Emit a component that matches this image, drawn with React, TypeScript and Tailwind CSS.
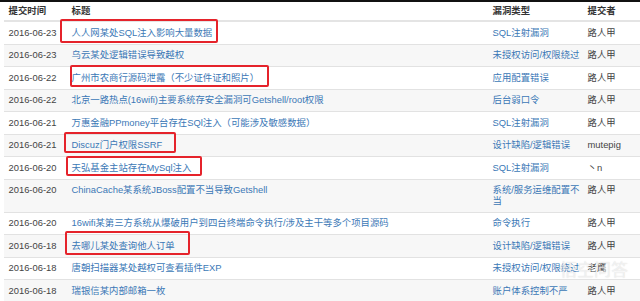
import React from "react";

const rows: [string, string, React.ReactNode, string][] = [
  ["2016-06-23", "人人网某处SQL注入影响大量数据", "SQL注射漏洞", "路人甲"],
  ["2016-06-23", "乌云某处逻辑错误导致越权", "未授权访问/权限绕过", "路人甲"],
  ["2016-06-22", "广州市农商行源码泄露（不少证件证和照片）", "应用配置错误", "路人甲"],
  ["2016-06-22", "北京一路热点(16wifi)主要系统存安全漏洞可Getshell/root权限", "后台弱口令", "路人甲"],
  ["2016-06-21", "万惠金融PPmoney平台存在SQl注入（可能涉及敏感数据）", "SQL注射漏洞", "路人甲"],
  ["2016-06-21", "Discuz门户权限SSRF", "设计缺陷/逻辑错误", "mutepig"],
  ["2016-06-20", "天弘基金主站存在MySql注入", "SQL注射漏洞", "丶n"],
  ["2016-06-20", "ChinaCache某系统JBoss配置不当导致Getshell", <>系统/服务运维配置不<br />当</>, "路人甲"],
  ["2016-06-20", "16wifi某第三方系统从爆破用户到四台终端命令执行/涉及主干等多个项目源码", "命令执行", "路人甲"],
  ["2016-06-18", "去哪儿某处查询他人订单", "设计缺陷/逻辑错误", "路人甲"],
  ["2016-06-18", "唐朝扫描器某处越权可查看插件EXP", "未授权访问/权限绕过", "老鹰"],
  ["2016-06-18", "瑞银信某内部邮箱一枚", "账户体系控制不严", "路人甲"],
];

const boxes = [
  { l: 60, t: 19, w: 158, h: 24 },
  { l: 70, t: 65, w: 199, h: 22 },
  { l: 64, t: 132, w: 112, h: 21 },
  { l: 66, t: 156, w: 136, h: 20 },
  { l: 65, t: 231, w: 125, h: 24 },
];

export default function App() {
  return (
    <div
      className="relative w-[640px] h-[301px] overflow-hidden bg-white"
      style={{ fontFamily: '"Liberation Sans", "Noto Sans CJK SC", sans-serif' }}
    >
      <div className="h-[2px] bg-[#111]" />
      <div className="pl-[4px]">
        <table className="w-[636px] table-fixed border-collapse text-[9.4px] leading-[10.5px] text-[#444]">
          <colgroup>
            <col className="w-[63px]" />
            <col className="w-[421px]" />
            <col className="w-[95px]" />
            <col />
          </colgroup>
          <thead>
            <tr className="border-b-2 border-[#e4e4e4]">
              <th className="px-[4.5px] pt-[4px] pb-[3.5px] text-left font-bold text-[#333]">提交时间</th>
              <th className="px-[4.5px] pt-[4px] pb-[3.5px] text-left font-bold text-[#333]">标题</th>
              <th className="px-[4.5px] pt-[4px] pb-[3.5px] text-left font-bold text-[#333]">漏洞类型</th>
              <th className="px-[4.5px] pt-[4px] pb-[3.5px] text-left font-bold text-[#333]">提交者</th>
            </tr>
          </thead>
          <tbody>
            {rows.map((r, i) => (
              <tr
                key={i}
                className={`border-t border-[#e2e2e2] ${i % 2 === 1 ? "bg-[#f7f7f7]" : "bg-white"}`}
              >
                <td className="px-[4.5px] py-[5.5px] align-top whitespace-nowrap">{r[0]}</td>
                <td className="px-[4.5px] py-[5.5px] align-top whitespace-nowrap text-[#3b78b6]">{r[1]}</td>
                <td className="pl-[4.5px] pr-0 py-[5.5px] align-top whitespace-nowrap text-[#3b78b6]">{r[2]}</td>
                <td className="px-[4.5px] py-[5.5px] align-top whitespace-nowrap">{r[3]}</td>
              </tr>
            ))}
          </tbody>
        </table>
      </div>
      {boxes.map((b, i) => (
        <div
          key={i}
          className="absolute border-2 border-[#e5232b] rounded-[2px]"
          style={{ left: b.l, top: b.t, width: b.w, height: b.h }}
        />
      ))}
      <div className="absolute left-[560px] top-[262px] text-[17px] leading-[18px] text-white/60 [text-shadow:0_0_1px_rgba(150,150,150,0.4)]">
        悟空问答
      </div>
    </div>
  );
}
